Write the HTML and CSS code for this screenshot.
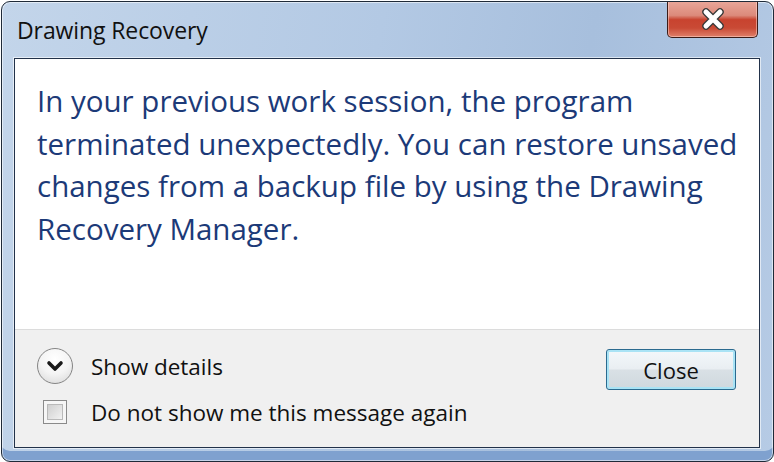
FILE: index.html
```html
<!DOCTYPE html>
<html lang="en">

<head>
    <meta charset="UTF-8">
    <title>Drawing Recovery</title>
    <link rel="stylesheet" href="styles.css">
</head>

<body>
    <div class="window">
        <div class="titlebar">
            <span class="title">Drawing Recovery</span>
            <button class="close-x" title="Close">
                <svg width="30" height="22" viewBox="0 0 30 22">
                    <path d="M8 4 L22 18 M22 4 L8 18" stroke="#3a3a3a" stroke-width="7.5" stroke-linecap="round" fill="none"/>
                    <path d="M8 4 L22 18 M22 4 L8 18" stroke="#ffffff" stroke-width="5" stroke-linecap="round" fill="none"/>
                </svg>
            </button>
        </div>
        <div class="client">
            <div class="message">
                <p>In your previous work session, the program terminated unexpectedly. You can restore unsaved changes from a backup file by using the Drawing Recovery Manager.</p>
            </div>
            <div class="footer">
                <div class="options">
                    <div class="option">
                        <span class="icon-slot">
                            <span class="expander">
                                <svg width="20" height="14" viewBox="0 0 20 14">
                                    <path d="M4 4 L10 10 L16 4" stroke="#1a1a1a" stroke-width="3.6" stroke-linecap="round" stroke-linejoin="round" fill="none"/>
                                </svg>
                            </span>
                        </span>
                        <span>Show details</span>
                    </div>
                    <div class="option">
                        <span class="icon-slot"><span class="checkbox"></span></span>
                        <span>Do not show me this message again</span>
                    </div>
                </div>
                <button class="btn">Close</button>
            </div>
        </div>
    </div>
</body>

</html>
```

FILE: styles.css
```css
body {
    margin: 0;
    background: #ffffff;
    font-family: "Open Sans", "Noto Sans", sans-serif;
}

.window {
    box-sizing: border-box;
    width: 773px;
    height: 461px;
    margin: 1px 0 0 1px;
    display: flex;
    flex-direction: column;
    border: 1px solid #1f2a38;
    border-radius: 9px 9px 9px 9px;
    background: linear-gradient(100deg, #c3d5ea 0%, #b3c9e4 45%, #a7bfdd 70%, #b6cbe5 100%);
    box-shadow: inset 0 0 0 1px rgba(255, 255, 255, 0.55), inset 0 -12px 0 -2px #7fa1cf;
    overflow: hidden;
}

.titlebar {
    height: 56px;
    display: flex;
    justify-content: space-between;
    align-items: flex-start;
}

.title {
    margin: 12px 0 0 15px;
    font-size: 23px;
    color: #111;
    letter-spacing: -0.1px;
}

.close-x {
    width: 91px;
    height: 37px;
    margin: -1px 15px 0 0;
    padding: 0;
    border: 1px solid #3b1c18;
    border-top: none;
    border-radius: 0 0 5px 5px;
    background: linear-gradient(#e9a79a 0%, #dc8a7b 40%, #c8432f 52%, #c94a35 75%, #e0806a 100%);
    box-shadow: inset 0 0 0 1px rgba(255, 220, 210, 0.5);
    display: flex;
    align-items: center;
    justify-content: center;
}

.client {
    flex: 1;
    margin: 0 13px 13px 12px;
    display: flex;
    flex-direction: column;
    border: 1px solid #22324a;
    box-shadow: 0 0 0 1px rgba(255, 255, 255, 0.6);
    background: #ffffff;
}

.message {
    height: 270px;
    padding: 0 10px 0 22px;
}

.message p {
    margin: 21px 0 0;
    font-size: 29.5px;
    line-height: 42.5px;
    color: #1c3a78;
}

.footer {
    flex: 1;
    display: flex;
    justify-content: space-between;
    align-items: flex-start;
    padding: 18px 23px 0 22px;
    background: #f0f0f0;
    border-top: 1px solid #dcdcdc;
}

.options {
    display: flex;
    flex-direction: column;
    gap: 10px;
}

.option {
    display: flex;
    align-items: center;
    gap: 18px;
    height: 36px;
    font-size: 22.5px;
    color: #111;
}

.icon-slot {
    width: 36px;
    display: flex;
    justify-content: center;
}

.expander {
    box-sizing: border-box;
    width: 36px;
    height: 36px;
    border: 1px solid #858585;
    border-radius: 50%;
    background: radial-gradient(circle at 50% 30%, #ffffff 0%, #f4f4f4 50%, #d6d6d6 100%);
    display: flex;
    align-items: center;
    justify-content: center;
}

.checkbox {
    box-sizing: border-box;
    width: 24px;
    height: 24px;
    border: 1px solid #8a8a8a;
    background: #f6f6f6;
    padding: 3px;
    display: flex;
}

.checkbox::before {
    content: "";
    flex: 1;
    border: 1px solid #b9b9b9;
    background: linear-gradient(135deg, #cfcfcf, #f2f2f2);
}

.btn {
    width: 130px;
    height: 41px;
    margin-top: 1px;
    border: 1px solid #2b6a8f;
    border-radius: 3px;
    background: linear-gradient(#f3f8fb 0%, #e9eef2 48%, #d9e0e5 52%, #cfd8de 100%);
    box-shadow: inset 0 0 0 2px #a9e3f5;
    font-family: "Open Sans", "Noto Sans", sans-serif;
    font-size: 22px;
    color: #111;
}
```
